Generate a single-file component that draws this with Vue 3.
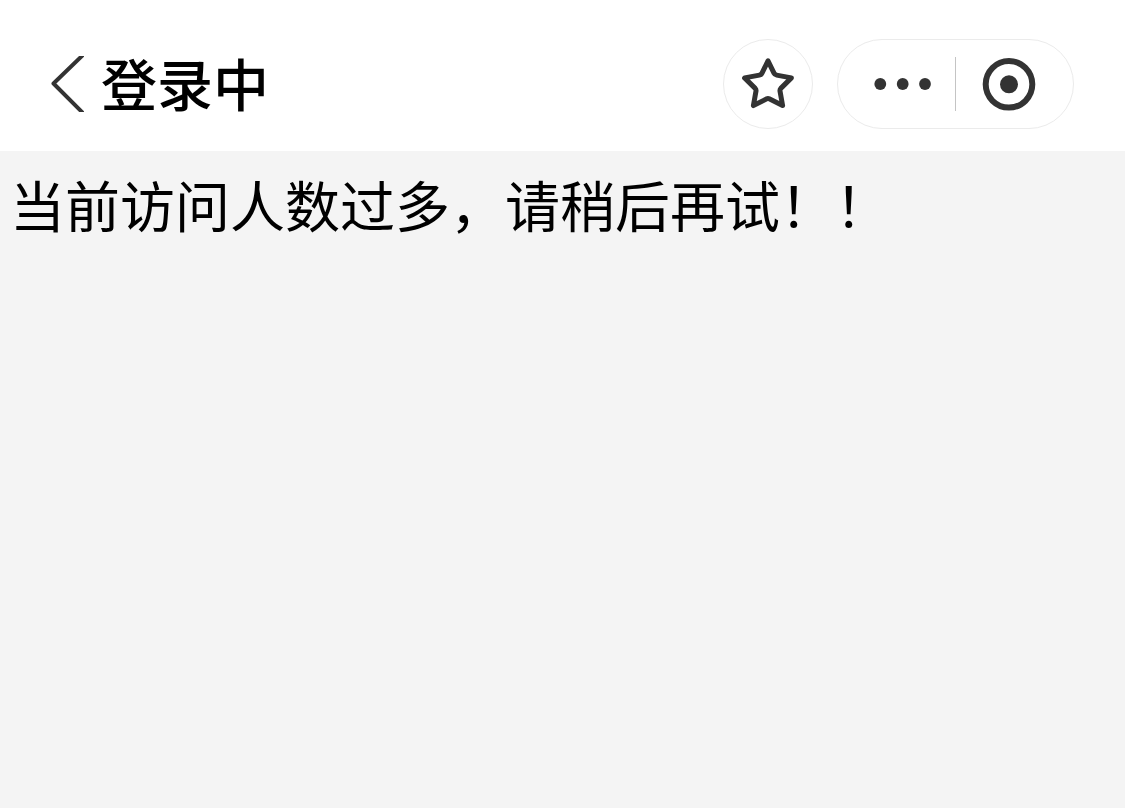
<script setup>
const title = '登录中'
const message = '当前访问人数过多，请稍后再试！！'
</script>

<template>
  <div class="page">
    <header class="bar">
      <button class="back" type="button" aria-label="返回">
        <svg width="34" height="56" viewBox="0 0 34 56" aria-hidden="true">
          <path d="M34 -2 3.5 27.5 34 58" />
        </svg>
      </button>
      <h1 class="title">{{ title }}</h1>
      <button class="favorite" type="button" aria-label="收藏">
        <svg width="56" height="56" viewBox="0 0 56 56" aria-hidden="true">
          <path d="M28 4.8 34 17.2Q34.8 18.8 36.6 19.1L51.4 21.9 40.8 32.4Q39.8 33.5 40 35L42.6 49.6 29.2 42.8Q28 42.2 26.8 42.8L13.4 49.6 16 35Q16.2 33.5 15.2 32.4L4.6 21.9 19.4 19.1Q21.2 18.8 22 17.2Z" />
        </svg>
      </button>
      <div class="capsule">
        <button class="more" type="button" aria-label="更多">
          <svg width="58" height="14" viewBox="0 0 58 14" aria-hidden="true">
            <circle cx="6.3" cy="7" r="5.9" />
            <circle cx="28.7" cy="7" r="5.9" />
            <circle cx="51" cy="7" r="5.9" />
          </svg>
        </button>
        <span class="divider"></span>
        <button class="close" type="button" aria-label="关闭">
          <svg width="54" height="54" viewBox="0 0 54 54" aria-hidden="true">
            <circle class="ring" cx="27" cy="27.3" r="23.3" />
            <circle cx="27" cy="27.3" r="9" />
          </svg>
        </button>
      </div>
    </header>
    <main class="content">
      <p class="message">{{ message }}</p>
    </main>
  </div>
</template>

<style>
body {
  margin: 0;
  background: #f4f4f4;
}
</style>

<style scoped>
.page {
  min-height: 100vh;
  background: #f4f4f4;
  color: #000;
  font-family: "Noto Sans CJK SC", sans-serif;
}
.bar {
  display: flex;
  align-items: center;
  box-sizing: border-box;
  padding: 39px 51px 22px 50px;
  background: #fff;
}
button {
  display: flex;
  align-items: center;
  justify-content: center;
  padding: 0;
  border: 0;
  background: none;
  cursor: pointer;
}
svg {
  display: block;
  fill: #333;
}
.back path {
  fill: none;
  stroke: #333;
  stroke-width: 4;
  stroke-linejoin: round;
}
.title {
  flex: 1;
  margin: 0 0 0 17px;
  padding-bottom: 4px;
  font-size: 56px;
  font-weight: 500;
  line-height: 80px;
}
.favorite {
  box-sizing: border-box;
  width: 90px;
  height: 90px;
  margin-right: 24px;
  border: 1px solid #ebebeb;
  border-radius: 50%;
}
.favorite path {
  fill: none;
  stroke: #333;
  stroke-width: 5;
  stroke-linejoin: round;
}
.capsule {
  display: flex;
  align-items: center;
  box-sizing: border-box;
  width: 237px;
  height: 90px;
  border: 1px solid #ebebeb;
  border-radius: 45px;
}
.more,
.close {
  flex: 1;
  height: 88px;
}
.more {
  padding-left: 12px;
}
.close {
  padding-right: 12px;
}
.divider {
  width: 1px;
  height: 54px;
  background: #c4c4c4;
}
.ring {
  fill: none;
  stroke: #333;
  stroke-width: 6;
}
.content {
  padding: 12px 10px;
}
.message {
  margin: 0;
  font-size: 55px;
  line-height: 80px;
}
</style>
